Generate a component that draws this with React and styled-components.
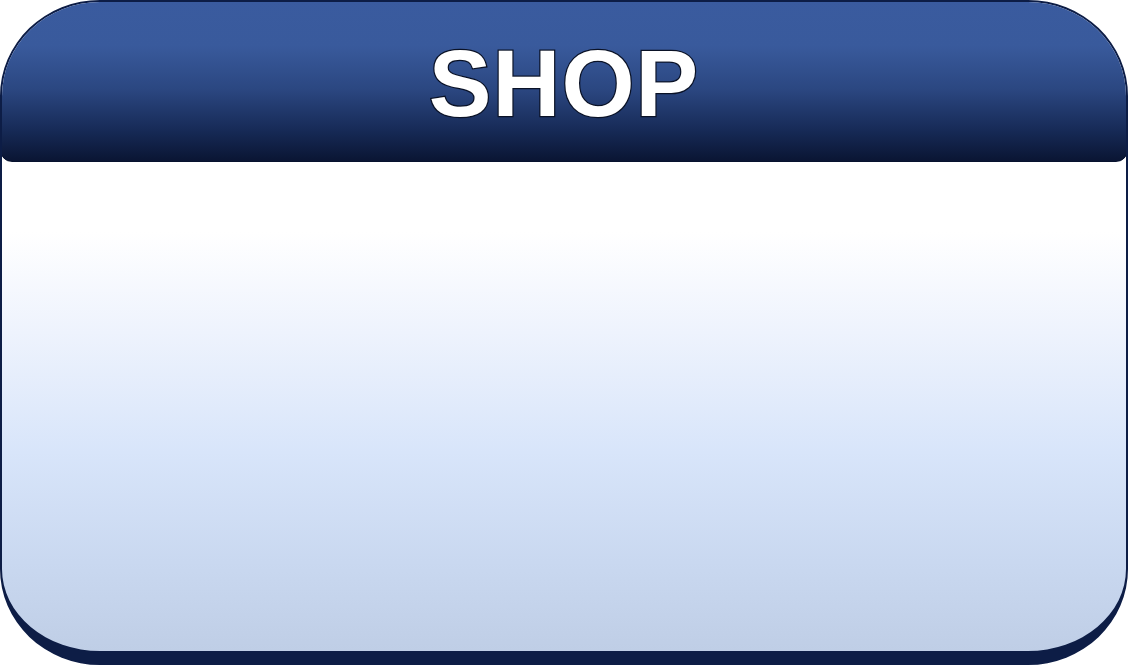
import React from 'react'
import styled, { createGlobalStyle } from 'styled-components'

const GlobalStyle = createGlobalStyle`
  html, body {
    margin: 0;
    padding: 0;
    background: #ffffff;
  }
  body {
    font-family: "Liberation Sans", Arial, sans-serif;
  }
`

const Panel = styled.div`
  box-sizing: border-box;
  width: 1128px;
  height: 665px;
  display: flex;
  flex-direction: column;
  border: 2px solid #0d1d46;
  border-bottom-width: 14px;
  border-radius: 100px / 96px;
  overflow: hidden;
  background: linear-gradient(
    to bottom,
    #ffffff 0px,
    #ffffff 230px,
    #eef3fd 330px,
    #d8e5fa 450px,
    #c9d8f0 560px,
    #bfcee6 100%
  );
`

const Header = styled.header`
  box-sizing: border-box;
  height: 162px;
  margin: -2px -2px 0;
  display: flex;
  align-items: center;
  justify-content: center;
  border: 1px solid #07122e;
  border-radius: 0 0 12px 12px;
  background: linear-gradient(
    to bottom,
    #3a5b9f 0%,
    #395a9c 28%,
    #2b4781 55%,
    #172b58 80%,
    #0a1533 100%
  );
`

const Title = styled.h1`
  margin: 6px 0 0;
  font-family: "Liberation Sans", Arial, sans-serif;
  font-weight: 700;
  font-size: 94px;
  line-height: 1;
  letter-spacing: 1px;
  color: #ffffff;
  -webkit-text-stroke: 2.5px #0a1226;
  paint-order: stroke fill;
`

const Body = styled.main`
  flex: 1;
`

export default function App() {
  return (
    <>
      <GlobalStyle />
      <Panel>
        <Header>
          <Title>SHOP</Title>
        </Header>
        <Body />
      </Panel>
    </>
  )
}
